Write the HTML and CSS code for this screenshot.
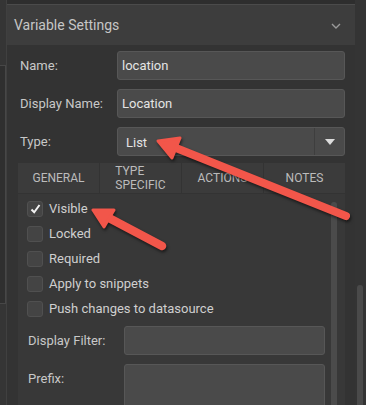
FILE: index.html
```html
<!DOCTYPE html>
<html lang="en">

<head>
    <meta charset="UTF-8">
    <title>Variable Settings</title>
    <link rel="stylesheet" href="styles.css">
</head>

<body>
    <div class="app">
        <div class="side-left">
            <div class="side-tab"></div>
        </div>

        <div class="panel">
            <div class="topbar"></div>
            <div class="header">
                <span>Variable Settings</span>
                <svg class="chevron" width="10" height="6" viewBox="0 0 10 6">
                    <path d="M1 1 L5 5 L9 1" fill="none" stroke="#9a9a9a" stroke-width="1.4" />
                </svg>
            </div>

            <div class="body">
                <div class="row">
                    <label>Name:</label>
                    <div class="input">location</div>
                </div>
                <div class="row">
                    <label>Display Name:</label>
                    <div class="input">Location</div>
                </div>
                <div class="row">
                    <label>Type:</label>
                    <div class="input select">
                        <span class="select-value">List</span>
                        <span class="select-btn">
                            <svg width="10" height="6" viewBox="0 0 10 6">
                                <path d="M0 0 H10 L5 6 Z" fill="#dcdcdc" />
                            </svg>
                        </span>
                    </div>
                </div>

                <div class="tabs">
                    <div class="tab">General</div>
                    <div class="tab"><span class="tab-two">Type<br>Specific</span></div>
                    <div class="tab">Actions</div>
                    <div class="tab">Notes</div>
                </div>

                <div class="tab-content">
                    <div class="list">
                        <div class="check"><span class="box on">
                                <svg width="11" height="10" viewBox="0 0 11 10">
                                    <path d="M1.5 5.5 L4.2 8.3 L9.5 1" fill="none" stroke="#f2f2f2" stroke-width="2" />
                                </svg></span>Visible</div>
                        <div class="check"><span class="box"></span>Locked</div>
                        <div class="check"><span class="box"></span>Required</div>
                        <div class="check"><span class="box"></span>Apply to snippets</div>
                        <div class="check"><span class="box"></span>Push changes to datasource</div>

                        <div class="row small first">
                            <label>Display Filter:</label>
                            <div class="input"></div>
                        </div>
                        <div class="row small top">
                            <label>Prefix:</label>
                            <div class="input tall"></div>
                        </div>
                    </div>
                    <div class="track"></div>
                </div>
            </div>
        </div>

        <div class="side-right">
            <div class="outer-track"></div>
        </div>
    </div>

    <!-- annotation arrows drawn over the screenshot -->
    <svg class="arrows" width="366" height="405" viewBox="0 0 366 405">
        <g fill="#f2564a" stroke="#f2564a" stroke-linejoin="round" stroke-linecap="round">
            <line x1="346" y1="216" x2="176" y2="148" stroke-width="8" />
            <polygon points="158,141 180,138 172,158" stroke-width="3" />
            <line x1="162" y1="246" x2="109" y2="218" stroke-width="8.5" />
            <polygon points="93,210 114,210 104,227" stroke-width="3" />
        </g>
    </svg>
</body>

</html>
```

FILE: styles.css
```css
* {
    box-sizing: border-box;
}

body {
    margin: 0;
    background: #303030;
    font-family: Roboto, "Liberation Sans", sans-serif;
    color: #c8c8c8;
    position: relative;
    overflow: hidden;
}

.app {
    display: flex;
    height: 405px;
    overflow: hidden;
}

.side-left {
    width: 7px;
    background: #353535;
    border-right: 1px solid #404040;
    padding-top: 65px;
}

.side-tab {
    height: 239px;
    border-top: 1px solid #474747;
    border-bottom: 1px solid #474747;
    border-right: 1px solid #474747;
    background: #2f2f2f;
}

.panel {
    width: 348px;
    background: #333333;
    overflow: hidden;
}

.topbar {
    height: 5px;
    background: #2e2e2e;
    border-bottom: 1px solid #4b4b4b;
}

.header {
    height: 40px;
    background: #3d3d3d;
    display: flex;
    align-items: center;
    justify-content: space-between;
    padding: 0 14px 0 7px;
    font-size: 14px;
    color: #c6c6c6;
}

.chevron {
    margin-top: 2px;
}

.body {
    padding: 6px 10px 0 13px;
}

.row {
    display: flex;
    align-items: center;
    margin-bottom: 9px;
    font-size: 13px;
}

.row label {
    width: 97px;
}

.input {
    flex: 1;
    height: 29px;
    background: #4a4a4a;
    border: 1px solid #575757;
    border-radius: 3px;
    color: #e4e4e4;
    font-size: 13px;
    padding: 6px 4px;
    line-height: 15px;
}

.select {
    display: flex;
    padding: 0;
}

.select-value {
    flex: 1;
    padding: 7px 8px;
}

.select-btn {
    width: 30px;
    border-left: 1px solid #3e3e3e;
    display: flex;
    align-items: center;
    justify-content: center;
}

.tabs {
    display: flex;
    height: 30px;
    margin: -2px 0 0 -2px;
    background: #3b3b3b;
}

.tab {
    flex: 1;
    display: flex;
    align-items: center;
    justify-content: center;
    text-transform: uppercase;
    font-size: 12px;
    color: #bcbcbc;
    border-right: 1px solid #333;
}

.tab:last-child {
    border-right: none;
}

.tab-two {
    text-align: left;
    line-height: 14px;
}

.tab-content {
    display: flex;
    margin-left: -2px;
    height: 220px;
    background: #383838;
    border-top: 1px solid #333;
    overflow: hidden;
}

.list {
    flex: 1;
    padding: 2px 6px 0 9px;
}

.check {
    display: flex;
    align-items: center;
    height: 25px;
    font-size: 13px;
    color: #cfcfcf;
}

.box {
    width: 16px;
    height: 16px;
    margin-right: 6px;
    background: #444;
    border: 1px solid #505050;
    border-radius: 3px;
    display: flex;
    align-items: center;
    justify-content: center;
}

.row.first {
    margin-top: 5px;
}

.row.top {
    align-items: flex-start;
}

.row.top label {
    padding-top: 7px;
}

.row.small label {
    width: 97px;
    padding-left: 1px;
}

.tall {
    height: 60px;
}

.track {
    width: 6px;
    margin: 8px 8px 0 0;
    background: #4b4b4b;
    border-radius: 3px 3px 0 0;
}

.side-right {
    flex: 1;
    background: #343434;
    padding: 285px 3px 0 2px;
}

.outer-track {
    height: 120px;
    background: #4a4a4a;
    border-radius: 3px 3px 0 0;
}

.arrows {
    position: absolute;
    top: 0;
    left: 0;
    filter: drop-shadow(1px 2px 1.5px rgba(0, 0, 0, 0.55));
}
```
